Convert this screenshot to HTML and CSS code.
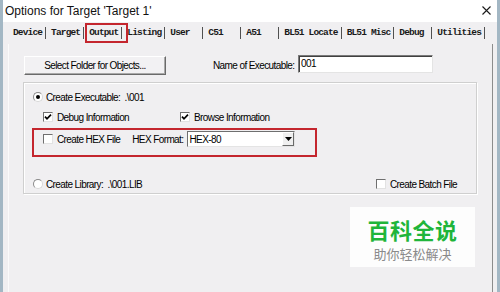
FILE: index.html
```html
<!DOCTYPE html>
<html>
<head>
<meta charset="utf-8">
<title>Options for Target</title>
<link rel="stylesheet" href="styles.css">
</head>
<body>
<div class="window">
  <div class="titlebar">
    <span class="title">Options for Target 'Target 1'</span>
    <svg class="close" width="9" height="9" viewBox="0 0 9 9"><path d="M0.5 0.5L8.5 8.5M8.5 0.5L0.5 8.5" stroke="#1a1a1a" stroke-width="1.1" fill="none"/></svg>
  </div>
  <div class="tabs">
    <span class="tab">Device</span>
    <span class="tab">Target</span>
    <span class="tab active">Output</span>
    <span class="tab">Listing</span>
    <span class="tab">User</span>
    <span class="tab">C51</span>
    <span class="tab">A51</span>
    <span class="tab">BL51 Locate</span>
    <span class="tab">BL51 Misc</span>
    <span class="tab">Debug</span>
    <span class="tab">Utilities</span>
  </div>
  <div class="page">
    <div class="row-top">
      <button class="btn">Select Folder for Objects...</button>
      <span class="name-lbl">Name of Executable:</span>
      <span class="input">001</span>
    </div>
    <div class="group">
      <div class="opt r1"><span class="radio on"></span><span>Create Executable:&nbsp; .\001</span></div>
      <div class="opt r2">
        <span class="item col1"><span class="chk"><svg width="8" height="8" viewBox="0 0 8 8"><path d="M1 3.6L3 5.8L7 1.6" stroke="#000" stroke-width="1.7" fill="none"/></svg></span><span>Debug Information</span></span>
        <span class="item"><span class="chk"><svg width="8" height="8" viewBox="0 0 8 8"><path d="M1 3.6L3 5.8L7 1.6" stroke="#000" stroke-width="1.7" fill="none"/></svg></span><span>Browse Information</span></span>
      </div>
      <div class="redbox">
        <div class="hexrow">
          <span class="chk"></span><span>Create HEX File</span>
          <span class="hex-lbl">HEX Format:</span>
          <span class="select"><span class="sel-text">HEX-80</span><span class="drop"><svg width="7" height="4" viewBox="0 0 7 4"><path d="M0 0H7L3.5 4Z" fill="#000"/></svg></span></span>
        </div>
      </div>
      <div class="opt r4">
        <span class="radio"></span><span>Create Library:&nbsp; .\001.LIB</span>
        <span class="item batch"><span class="chk"></span><span>Create Batch File</span></span>
      </div>
    </div>
    <div class="watermark">
      <div class="wm-title">百科全说</div>
      <div class="wm-sub">助你轻松解决</div>
    </div>
  </div>
</div>
</body>
</html>
```

FILE: styles.css
```css
body {
  margin: 0;
  background: #f0eff1;
}

.window {
  width: 500px;
  height: 292px;
  box-sizing: border-box;
  border-left: 3px solid #a3b7c4;
  border-right: 3px solid #a3b7c4;
  display: flex;
  flex-direction: column;
  background: #f0eff1;
  font-family: "Liberation Sans", Arial, sans-serif;
  font-size: 10px;
  letter-spacing: -0.6px;
  color: #000;
  overflow: hidden;
}

.titlebar {
  height: 22px;
  flex: none;
  background: #ffffff;
  display: flex;
  align-items: center;
  justify-content: space-between;
  padding: 0 6px 0 2px;
}

.title {
  font-size: 12px;
  letter-spacing: 0;
  color: #111;
}

.close {
  margin-top: -1px;
}

.tabs {
  height: 22px;
  flex: none;
  display: flex;
  align-items: center;
  padding-left: 5px;
  font-family: "Liberation Mono", "Courier New", monospace;
  font-weight: bold;
  font-size: 9.5px;
  letter-spacing: -0.85px;
  color: #1a1a1a;
}

.tab {
  box-sizing: border-box;
  min-width: 38px;
  height: 12px;
  line-height: 12px;
  padding: 0 3px 0 5px;
  border-right: 1px solid #505050;
  white-space: nowrap;
}

.tab.active {
  position: relative;
}

.tab.active::after {
  content: "";
  position: absolute;
  left: 1px;
  right: -7px;
  top: -4px;
  bottom: -4px;
  border: 2px solid #c4262e;
}

.page {
  flex: 1;
  margin: 0 4px 0 5px;
  border-left: 1px solid #fbfbfb;
  border-right: 1px solid #8c8c8c;
  position: relative;
  padding-top: 11px;
}

.row-top {
  display: flex;
  align-items: center;
  height: 20px;
}

.btn {
  margin: 0 0 0 15px;
  width: 142px;
  height: 19px;
  padding: 0;
  font: inherit;
  letter-spacing: inherit;
  color: #000;
  background: #f2f1f3;
  border: 1px solid;
  border-color: #ffffff #6a6a6a #6a6a6a #ffffff;
  box-shadow: inset -1px -1px 0 #a9a9a9;
}

.name-lbl {
  margin-left: 47px;
  width: 85px;
}

.input {
  box-sizing: border-box;
  width: 135px;
  height: 18px;
  margin-bottom: 3px;
  padding: 2px 0 0 2px;
  background: #fff;
  border: 1px solid;
  border-color: #7a7a7a #e4e4e4 #e4e4e4 #7a7a7a;
  box-shadow: inset 1px 1px 0 #404040;
}

.group {
  box-sizing: border-box;
  margin: 7px 0 0 14px;
  width: 454px;
  height: 112px;
  border: 1px solid #cfcfcf;
  box-shadow: inset 1px 1px 0 #ffffff, 1px 1px 0 #ffffff;
  padding-top: 7px;
}

.opt {
  display: flex;
  align-items: center;
  height: 14px;
}

.r1 {
  padding-left: 9px;
}

.r2 {
  margin-top: 6px;
  padding-left: 19px;
}

.r4 {
  margin-top: 20px;
  padding-left: 9px;
  padding-right: 19px;
}

.item {
  display: flex;
  align-items: center;
}

.col1 {
  width: 137px;
}

.batch {
  margin-left: auto;
}

.radio {
  box-sizing: border-box;
  width: 10px;
  height: 10px;
  border-radius: 50%;
  background: #fff;
  border: 1px solid #8a8a8a;
  border-right-color: #d8d8d8;
  border-bottom-color: #d8d8d8;
  margin-right: 3px;
  display: flex;
  align-items: center;
  justify-content: center;
}

.radio.on::after {
  content: "";
  width: 4px;
  height: 4px;
  border-radius: 50%;
  background: #000;
}

.chk {
  box-sizing: border-box;
  width: 10px;
  height: 10px;
  background: #fff;
  border: 1px solid;
  border-color: #6f6f6f #e2e2e2 #e2e2e2 #6f6f6f;
  margin-right: 4px;
  display: flex;
  align-items: center;
  justify-content: center;
  flex: none;
}

.chk svg {
  display: block;
}

.redbox {
  box-sizing: border-box;
  margin: 4px 0 0 8px;
  width: 285px;
  height: 29px;
  border: 2px solid #c4262e;
  padding: 1px 0 0 9px;
}

.hexrow {
  display: flex;
  align-items: center;
  height: 16px;
}

.hex-lbl {
  margin-left: 12px;
  margin-right: 4px;
}

.select {
  box-sizing: border-box;
  width: 108px;
  height: 16px;
  background: #fff;
  border: 1px solid;
  border-color: #6f6f6f #e4e4e4 #e4e4e4 #6f6f6f;
  display: flex;
  align-items: center;
  justify-content: space-between;
}

.sel-text {
  padding-left: 1px;
}

.drop {
  box-sizing: border-box;
  width: 12px;
  height: 14px;
  background: #efefef;
  border: 1px solid;
  border-color: #ffffff #6a6a6a #6a6a6a #ffffff;
  display: flex;
  align-items: center;
  justify-content: center;
}

.watermark {
  position: absolute;
  left: 341px;
  top: 163px;
  width: 125px;
  height: 60px;
  background: #fdfdfd;
  display: flex;
  flex-direction: column;
  align-items: center;
  font-family: "Noto Sans CJK SC", sans-serif;
  letter-spacing: 0;
}

.wm-title {
  margin-top: 6px;
  font-size: 22px;
  line-height: 32px;
  font-weight: bold;
  color: #1fb53a;
  letter-spacing: 0.5px;
}

.wm-sub {
  font-size: 13px;
  line-height: 18px;
  color: #8a8a8a;
}
```
